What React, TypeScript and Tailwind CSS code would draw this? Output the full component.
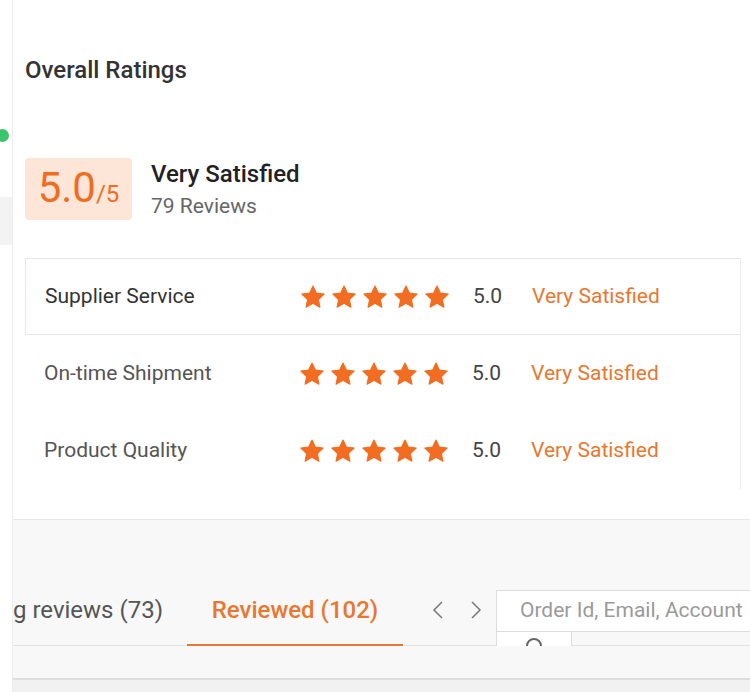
import React from "react";

const rows = [
  { label: "Supplier Service", score: "5.0", text: "Very Satisfied", active: true },
  { label: "On-time Shipment", score: "5.0", text: "Very Satisfied", active: false },
  { label: "Product Quality", score: "5.0", text: "Very Satisfied", active: false },
];

const Star = () => (
  <svg viewBox="0 0 24 24" className="h-[26px] w-[26px]">
    <path
      d="M12 1.8l3.1 6.6 7.2.9-5.3 5 1.4 7.1L12 17.9l-6.4 3.5 1.4-7.1-5.3-5 7.2-.9z"
      fill="#f26d21"
      stroke="#f26d21"
      strokeWidth="1"
      strokeLinejoin="round"
    />
  </svg>
);

const RatingRow = ({ label, score, text, active }: (typeof rows)[number]) => (
  <div
    className={`flex h-[77px] items-center ${
      active ? "border-y border-l border-[#e6e6e6]" : ""
    }`}
  >
    <div
      className={`w-[274px] pl-[19px] text-[21px] ${
        active ? "text-[#333]" : "text-[#555]"
      }`}
    >
      {label}
    </div>
    <div className="flex gap-[5px]">
      {[0, 1, 2, 3, 4].map((i) => (
        <Star key={i} />
      ))}
    </div>
    <div className="ml-[23px] w-[59px] text-[21px] text-[#444]">{score}</div>
    <div className="text-[21px] text-[#e8772f]">{text}</div>
  </div>
);

export default function App() {
  return (
    <div
      className="flex h-[692px] w-[750px] overflow-hidden bg-white"
      style={{ fontFamily: "Roboto, 'Noto Sans', sans-serif" }}
    >
      {/* left strip */}
      <div className="flex w-[13px] shrink-0 flex-col border-r border-[#ececec]">
        <div className="mt-[129px] -ml-[4px] h-[13px] w-[13px] rounded-full bg-[#3cc46a]" />
        <div className="mt-[55px] h-[48px] w-[12px] bg-[#f3f3f3]" />
      </div>

      <div className="flex flex-1 flex-col">
        {/* ratings card */}
        <div className="h-[520px] border-b border-[#e8e8e8] bg-white pl-[12px] pr-[9px]">
          <h2 className="pt-[55px] text-[24px] font-medium leading-[30px] text-[#333]">
            Overall Ratings
          </h2>

          <div className="mt-[73px] flex items-center gap-[19px]">
            <div className="flex h-[62px] w-[107px] items-baseline justify-center rounded-[4px] bg-[#fde6d8] pt-[6px] text-[#f06c1f]">
              <span className="text-[42px] leading-[48px]">5.0</span>
              <span className="text-[24px]">/5</span>
            </div>
            <div className="flex flex-col">
              <span className="text-[24px] font-medium leading-[30px] text-[#222]">
                Very Satisfied
              </span>
              <span className="mt-[4px] text-[21px] leading-[26px] text-[#666]">
                79 Reviews
              </span>
            </div>
          </div>

          <div className="mt-[38px] border-r border-[#ececec]">
            {rows.map((r) => (
              <RatingRow key={r.label} {...r} />
            ))}
          </div>
        </div>

        {/* tabs area */}
        <div className="flex flex-1 flex-col bg-[#f8f8f8]">
          <div className="mt-[70px] flex h-[56px] items-start border-b border-[#e3e3e3]">
            <div className="flex w-[150px] shrink-0 justify-end overflow-hidden">
              <span className="whitespace-nowrap pt-[5px] text-[24px] leading-[30px] text-[#555]">
                Pending reviews (73)
              </span>
            </div>
            <div className="ml-[24px] flex h-[56px] w-[216px] justify-center border-b-2 border-[#e8772f] pt-[5px]">
              <span className="text-[24px] font-medium leading-[30px] text-[#e8772f]">
                Reviewed (102)
              </span>
            </div>
            <div className="ml-[29px] flex gap-[26px] pt-[10px] text-[#777]">
              <svg viewBox="0 0 12 20" className="h-[20px] w-[12px]" fill="none" stroke="currentColor" strokeWidth="1.5">
                <path d="M10 2L2 10l8 8" />
              </svg>
              <svg viewBox="0 0 12 20" className="h-[20px] w-[12px]" fill="none" stroke="currentColor" strokeWidth="1.5">
                <path d="M2 2l8 8-8 8" />
              </svg>
            </div>
            <div className="ml-[14px] flex flex-1 flex-col">
              <div className="flex h-[42px] items-center border border-r-0 border-[#dcdcdc] bg-white pl-[23px] text-[21px] text-[#9a9a9a]">
                <span className="whitespace-nowrap">Order Id, Email, Account</span>
              </div>
              <div className="flex h-[14px] w-[76px] justify-center overflow-hidden border-x border-[#dcdcdc] bg-white">
                <div className="mt-[6px] h-[16px] w-[16px] rounded-full border-2 border-[#666]" />
              </div>
            </div>
          </div>
          <div className="mt-[32px] h-[2px] bg-[#dedede]" />
          <div className="flex-1 bg-[#f1f1f1]" />
        </div>
      </div>
    </div>
  );
}
